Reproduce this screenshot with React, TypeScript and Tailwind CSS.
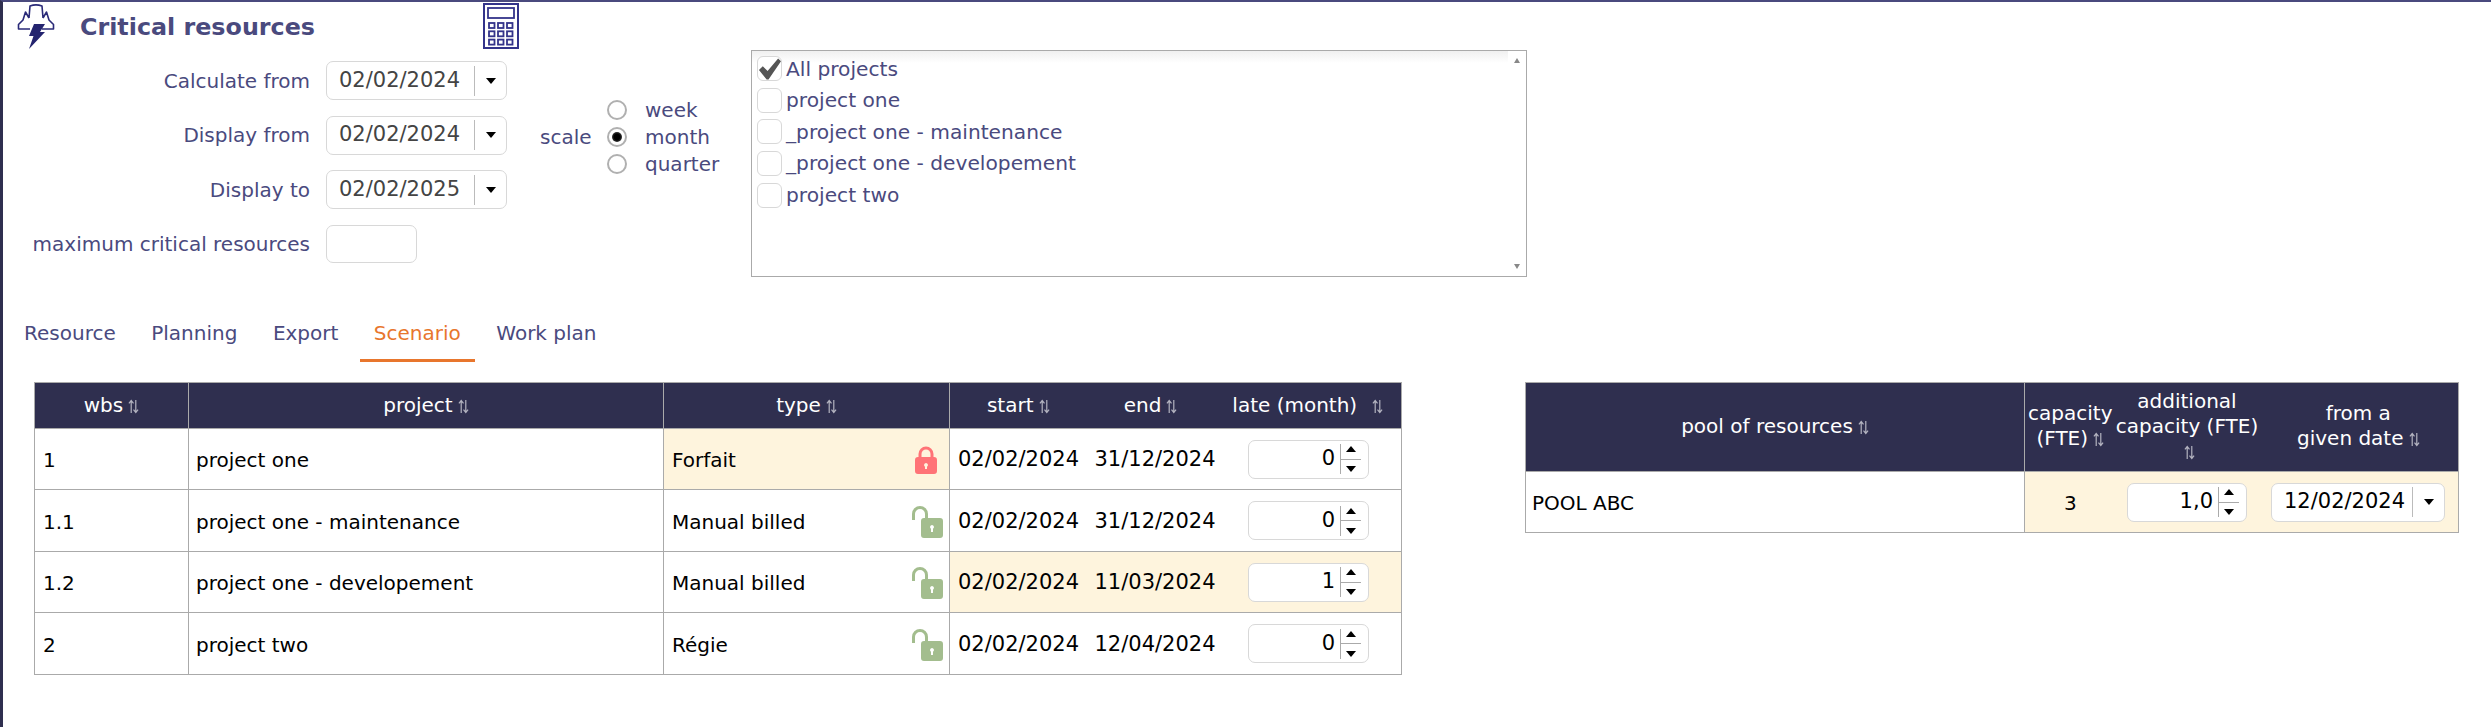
const FONT = "font-['DejaVu_Sans',sans-serif]";

function SortIcon() {
  return (
    <svg viewBox="0 0 12 16" className="inline-block w-[11px] h-[15px] ml-[5px] align-[-2px]" fill="none" stroke="#b4b4c0" strokeWidth="1.3">
      <path d="M3.5 15V2M1 4.5 3.5 1.5 6 4.5" />
      <path d="M8.5 1v13M6 11.5l2.5 3 2.5-3" />
    </svg>
  );
}

function LogoIcon() {
  return (
    <svg viewBox="0 0 38 46" className="w-[38px] h-[46px]" fill="none">
      <path d="M13 26H1.500v-4.500L6 17l2.500-8L12 15M25 26h11.500v-4.500L32 17l-2.500-8L26 15M12 15l1-12c4-1.500 8-1.500 12 0l1 12" stroke="#2a2a78" strokeWidth="1.600" strokeLinejoin="round" />
      <path d="M17 21h11l-5 8h5L12 46l4.500-13H12z" fill="#24246f" />
    </svg>
  );
}

function CalcIcon() {
  const keys = [0, 1, 2, 3, 4, 5, 6, 7, 8];
  return (
    <svg viewBox="0 0 36 46" className="w-[36px] h-[46px]" fill="none" stroke="#33338a" strokeWidth="1.800">
      <rect x="1" y="1" width="34" height="44" strokeWidth="2" />
      <rect x="5" y="5" width="26" height="10" />
      {keys.map((k) => (
        <rect key={k} x={6 + (k % 3) * 9} y={20 + Math.floor(k / 3) * 8.300} width="5.500" height="5" />
      ))}
    </svg>
  );
}

function LockIcon() {
  return (
    <svg viewBox="0 0 22 28" className="w-[22px] h-[28px] shrink-0" fill="#ff7377">
      <path d="M3.500 12V8a7.500 7.500 0 0 1 15 0v4h-3V8a4.500 4.500 0 0 0-9 0v4z" />
      <path fillRule="evenodd" d="M3 11h16a3 3 0 0 1 3 3v11a3 3 0 0 1-3 3H3a3 3 0 0 1-3-3V14a3 3 0 0 1 3-3zm8 6a2 2 0 0 0-1 3.700V23h2v-2.300A2 2 0 0 0 11 17z" />
    </svg>
  );
}

function UnlockIcon() {
  return (
    <svg viewBox="0 0 31 32" className="w-[31px] h-[32px] shrink-0" fill="#a3bd8e">
      <path d="M0 14V8a8 8 0 0 1 16 0v6h-3V8a5 5 0 0 0-10 0v6z" />
      <path fillRule="evenodd" d="M12 12h16a3 3 0 0 1 3 3v14a3 3 0 0 1-3 3H12a3 3 0 0 1-3-3V15a3 3 0 0 1 3-3zm8 7a2 2 0 0 0-1 3.700V26h2v-3.300A2 2 0 0 0 20 19z" />
    </svg>
  );
}

function DateBox({ value, w = "w-[181px]", color = "text-[#444]" }: { value: string; w?: string; color?: string }) {
  return (
    <div className={`${w} h-[39px] bg-white border border-[#d8d8d8] rounded-[7px] flex items-center shrink-0`}>
      <span className={`flex-1 pl-[12px] text-[21px] whitespace-nowrap ${color}`}>{value}</span>
      <span className="w-px h-[30px] bg-[#bbb]" />
      <span className="w-[31px] flex justify-center">
        <span className="w-0 h-0 border-x-[5px] border-x-transparent border-t-[6px] border-t-black" />
      </span>
    </div>
  );
}

function Spin({ value, w }: { value: string; w: string }) {
  return (
    <div className={`${w} h-[39px] bg-white border border-[#d8d8d8] rounded-[7px] flex items-center`}>
      <span className="flex-1 text-right pr-[5px] text-black text-[21px]">{value}</span>
      <span className="w-[21px] h-[30px] border-l border-[#aaa] mr-[7px] flex flex-col items-center justify-between py-[2px]">
        <span className="w-0 h-0 border-x-[5px] border-x-transparent border-b-[6px] border-b-black" />
        <span className="w-full h-px bg-[#aaa]" />
        <span className="w-0 h-0 border-x-[5px] border-x-transparent border-t-[6px] border-t-black" />
      </span>
    </div>
  );
}

function FormRow({ label, children }: { label: string; children: React.ReactNode }) {
  return (
    <div className="flex items-center h-[39px]">
      <span className="w-[307px] text-right text-[#4a4a7e] text-[20px] whitespace-nowrap">{label}</span>
      <span className="w-[16px]" />
      {children}
    </div>
  );
}

function Radio({ label, on }: { label: string; on?: boolean }) {
  return (
    <div className="flex items-center h-[27px]">
      <span className="w-[20px] h-[20px] rounded-full border-2 border-[#b0b0b0] bg-white flex items-center justify-center">
        {on && <span className="w-[10px] h-[10px] rounded-full bg-[radial-gradient(#000_40%,#666)]" />}
      </span>
      <span className="ml-[18px] text-[#4a4a7e] text-[20px]">{label}</span>
    </div>
  );
}

function CheckItem({ label, on }: { label: string; on?: boolean }) {
  return (
    <div className="flex items-center h-[31.6px]">
      <span className="w-[25px] h-[25px] rounded-[6px] border border-[#d8d8d8] bg-white flex items-center justify-center shrink-0">
        {on && (
          <svg viewBox="0 0 24 24" className="w-[24px] h-[24px]" fill="#555">
            <path d="M1 13l4-4 5 5L21 1l3 3-13 19h-2z" />
          </svg>
        )}
      </span>
      <span className="ml-[4px] text-[#4a4a7e] text-[20.200px] whitespace-nowrap">{label}</span>
    </div>
  );
}

const TABS = ["Resource", "Planning", "Export", "Scenario", "Work plan"];

const ROWS = [
  { wbs: "1", name: "project one", type: "Forfait", locked: true, end: "31/12/2024", late: "0", warn: false, h: "h-[61px]" },
  { wbs: "1.1", name: "project one - maintenance", type: "Manual billed", locked: false, end: "31/12/2024", late: "0", warn: false, h: "h-[62px]" },
  { wbs: "1.2", name: "project one - developement", type: "Manual billed", locked: false, end: "11/03/2024", late: "1", warn: true, h: "h-[61px]" },
  { wbs: "2", name: "project two", type: "Régie", locked: false, end: "12/04/2024", late: "0", warn: false, h: "h-[62px]" },
];

export default function App() {
  const th = "bg-[#2f2f4f] text-white font-normal text-[20px] text-center border-y border-[#aaa] whitespace-nowrap pb-[2px]";
  const td = "border-y border-[#aaa] text-black text-[20px] px-[8px] pt-[2px] whitespace-nowrap";
  const num = "text-[21px]";
  const warnBg = "bg-[#fef4dd]";
  return (
    <div className={`${FONT} w-full h-[727px] overflow-hidden bg-white border-t-2 border-t-[#4a4a7e] border-l-[3px] border-l-[#2f2f4f]`}>
      <div className="flex items-center h-[48px]">
        <div className="ml-[14px] w-[63px]"><LogoIcon /></div>
        <h1 className="w-[403px] pt-[4px] font-bold text-[#4a4a7e] text-[23.800px]">Critical resources</h1>
        <CalcIcon />
      </div>

      <div className="flex items-start">
        <div className="flex flex-col gap-[15.500px] pt-[11px] w-[537px]">
          <FormRow label="Calculate from"><DateBox value="02/02/2024" /></FormRow>
          <FormRow label="Display from"><DateBox value="02/02/2024" /></FormRow>
          <FormRow label="Display to"><DateBox value="02/02/2025" /></FormRow>
          <FormRow label="maximum critical resources">
            <div className="w-[91px] h-[38px] bg-white border border-[#d8d8d8] rounded-[7px]" />
          </FormRow>
        </div>

        <div className="flex items-center mt-[46px] w-[211px]">
          <span className="w-[67px] text-[#4a4a7e] text-[20px]">scale</span>
          <div>
            <Radio label="week" />
            <Radio label="month" on />
            <Radio label="quarter" />
          </div>
        </div>

        <div className="w-[776px] h-[227px] border border-[#aaa] flex">
          <div className="flex-1 pl-[5px] pt-[2px] bg-[linear-gradient(#f0f0f0,#ffffff_12px)]">
            <CheckItem label="All projects" on />
            <CheckItem label="project one" />
            <CheckItem label="_project one - maintenance" />
            <CheckItem label="_project one - developement" />
            <CheckItem label="project two" />
          </div>
          <div className="w-[18px] flex flex-col items-center justify-between py-[7px]">
            <span className="w-0 h-0 border-x-[3px] border-x-transparent border-b-[5px] border-b-[#888]" />
            <span className="w-0 h-0 border-x-[3px] border-x-transparent border-t-[5px] border-t-[#888]" />
          </div>
        </div>
      </div>

      <div className="flex gap-[7.500px] ml-[7px] mt-[33px]">
        {TABS.map((t) => (
          <div
            key={t}
            className={`h-[52px] px-[14px] pb-[3px] flex items-center text-[20px] border-b-[3px] ${
              t === "Scenario" ? "text-[#e8762d] border-[#e8762d]" : "text-[#4a4a7e] border-transparent"
            }`}
          >
            {t}
          </div>
        ))}
      </div>

      <div className="flex items-start mt-[20px] ml-[31px]">
        <table className="table-fixed border-collapse w-[1367px] border-x border-[#aaa]">
          <colgroup>
            <col className="w-[154px]" />
            <col className="w-[475px]" />
            <col className="w-[286px]" />
            <col className="w-[137px]" />
            <col className="w-[128px]" />
            <col className="w-[187px]" />
          </colgroup>
          <thead>
            <tr className="h-[46px]">
              <th className={`${th} border-r border-r-[#aaa]`}>wbs<SortIcon /></th>
              <th className={`${th} border-r border-r-[#aaa]`}>project<SortIcon /></th>
              <th className={`${th} border-r border-r-[#aaa]`}>type<SortIcon /></th>
              <th className={th}>start<SortIcon /></th>
              <th className={th}>end<SortIcon /></th>
              <th className={th}>late (month)<span className="ml-[10px]"><SortIcon /></span></th>
            </tr>
          </thead>
          <tbody>
            {ROWS.map((r) => (
              <tr key={r.wbs} className={r.h}>
                <td className={`${td} border-r border-r-[#aaa]`}>{r.wbs}</td>
                <td className={`${td} !pl-[7px] border-r border-r-[#aaa]`}>{r.name}</td>
                <td className={`${td} border-r border-r-[#aaa] ${r.locked ? warnBg : ""}`}>
                  <div className="flex items-center justify-between">
                    <span>{r.type}</span>
                    {r.locked ? <span className="mr-[4px] flex"><LockIcon /></span> : <span className="-mr-[2px] flex"><UnlockIcon /></span>}
                  </div>
                </td>
                <td className={`${td} ${num} ${r.warn ? warnBg : ""}`}>02/02/2024</td>
                <td className={`${td} ${num} ${r.warn ? warnBg : ""}`}>{r.end}</td>
                <td className={`${td} !pt-0 ${r.warn ? warnBg : ""}`}>
                  <div className="flex justify-end pr-[24px]"><Spin value={r.late} w="w-[121px]" /></div>
                </td>
              </tr>
            ))}
          </tbody>
        </table>

        <table className="table-fixed border-collapse w-[933px] ml-[123px] border-x border-[#aaa]">
          <colgroup>
            <col className="w-[499px]" />
            <col className="w-[91px]" />
            <col className="w-[143px]" />
            <col className="w-[200px]" />
          </colgroup>
          <thead>
            <tr className="h-[89px]">
              <th className={`${th} border-r border-r-[#aaa]`}>pool of resources<SortIcon /></th>
              <th className={`${th} leading-[25px]`}>capacity<br />(FTE)<SortIcon /></th>
              <th className={`${th} leading-[25px]`}>additional<br />capacity (FTE)<br /><SortIcon /></th>
              <th className={`${th} leading-[25px]`}>from a<br />given date<SortIcon /></th>
            </tr>
          </thead>
          <tbody>
            <tr className="h-[61px]">
              <td className={`${td} !pl-[6px] border-r border-r-[#aaa]`}>POOL ABC</td>
              <td className={`${td} ${warnBg} text-center`}>3</td>
              <td className={`${td} !pt-0 ${warnBg}`}>
                <div className="flex justify-center"><Spin value="1,0" w="w-[120px]" /></div>
              </td>
              <td className={`${td} !pt-0 ${warnBg}`}>
                <div className="flex justify-end pr-[5px]"><DateBox value="12/02/2024" w="w-[174px]" color="text-black" /></div>
              </td>
            </tr>
          </tbody>
        </table>
      </div>
    </div>
  );
}
